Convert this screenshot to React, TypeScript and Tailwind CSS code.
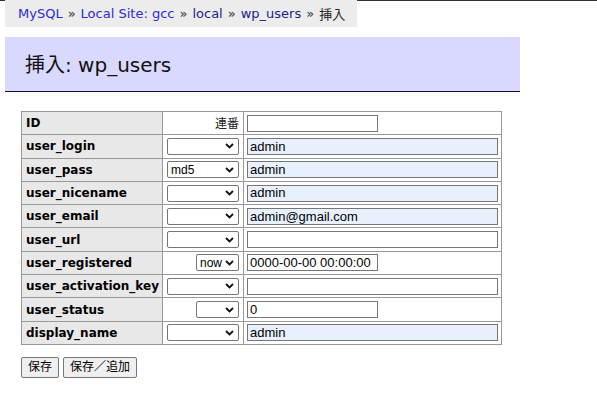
import React from "react";

type Row = {
  name: string;
  func?: string;
  narrow?: boolean;
  serial?: boolean;
  value: string;
  short?: boolean;
  filled?: boolean;
};

const rows: Row[] = [
  { name: "ID", serial: true, value: "", short: true },
  { name: "user_login", value: "admin", filled: true },
  { name: "user_pass", func: "md5", value: "admin", filled: true },
  { name: "user_nicename", value: "admin", filled: true },
  { name: "user_email", value: "admin@gmail.com", filled: true },
  { name: "user_url", value: "" },
  { name: "user_registered", func: "now", narrow: true, value: "0000-00-00 00:00:00", short: true },
  { name: "user_activation_key", value: "" },
  { name: "user_status", narrow: true, value: "0", short: true },
  { name: "display_name", value: "admin", filled: true },
];

const verdana = "font-['DejaVu_Sans',Verdana,sans-serif]";
const arial = "font-['Liberation_Sans','Noto_Sans_CJK_JP',Arial,sans-serif]";

function FuncSelect({ value, narrow }: { value?: string; narrow?: boolean }) {
  return (
    <div
      className={`ml-auto flex h-[17px] items-center justify-between rounded-[2px] border border-[#767676] bg-white pl-[3px] pr-[4px] text-[12px] text-black ${arial} ${
        narrow ? "w-[43px]" : "w-[72px]"
      }`}
    >
      <span className="leading-none">{value ?? ""}</span>
      <svg width="9" height="6" viewBox="0 0 9 6" className="shrink-0">
        <path d="M1 1 L4.5 4.5 L8 1" fill="none" stroke="#111" strokeWidth="1.8" />
      </svg>
    </div>
  );
}

export default function App() {
  return (
    <div className="min-h-[420px] w-[597px] border-t border-[#333] bg-white">
      {/* breadcrumb */}
      <div className={`-mt-px ml-[5px] flex h-[27px] w-[352px] items-center bg-[#ececec] pl-[13px] text-[13px] ${verdana}`}>
        <span className="text-[#2a2ad6]">MySQL</span>
        <span className="px-[5px] text-[#333]">»</span>
        <span className="text-[#2a2ad6]">Local Site: gcc</span>
        <span className="px-[5px] text-[#333]">»</span>
        <span className="text-[#1c1c8c]">local</span>
        <span className="px-[5px] text-[#333]">»</span>
        <span className="text-[#1c1c8c]">wp_users</span>
        <span className="px-[5px] text-[#333]">»</span>
        <span className="text-[#222] font-['Noto_Sans_CJK_JP',sans-serif]">挿入</span>
      </div>

      {/* header */}
      <div className="ml-[5px] mt-[10px] flex h-[55px] w-[515px] items-center border-b border-[#111133] bg-[#d9d9ff] pl-[20px]">
        <h1 className={`text-[20px] text-[#111] ${verdana}`}>
          <span className="font-['Noto_Sans_CJK_JP',sans-serif]">挿入</span>: wp_users
        </h1>
      </div>

      {/* form table */}
      <table className="ml-[21px] mt-[19px] w-[481px] border-collapse border border-[#999]">
        <tbody>
          {rows.map((r) => (
            <tr key={r.name} className="h-[23.3px]">
              <td className={`w-[142px] border border-[#999] bg-[#e8e8e8] pl-[4px] text-[12px] font-bold text-black ${verdana}`}>
                {r.name}
              </td>
              <td className="w-[80px] border border-[#999] px-[4px]">
                {r.serial ? (
                  <div className="text-right text-[12px] text-[#222] font-['Noto_Sans_CJK_JP',sans-serif]">連番</div>
                ) : (
                  <FuncSelect value={r.func} narrow={r.narrow} />
                )}
              </td>
              <td className="border border-[#999] px-[3px]">
                <div
                  className={`flex h-[17px] items-center border border-[#767676] pl-[2px] text-[13px] text-black ${arial} ${
                    r.short ? "w-[131px]" : "w-[251px]"
                  } ${r.filled ? "bg-[#e8f0fe]" : "bg-white"}`}
                >
                  {r.value}
                </div>
              </td>
            </tr>
          ))}
        </tbody>
      </table>

      {/* buttons */}
      <div className={`ml-[21px] mt-[12px] flex gap-[4px] text-[12px] ${arial}`}>
        <button className="h-[21px] rounded-[2px] border border-[#767676] bg-[#efefef] px-[6px] text-black">保存</button>
        <button className="h-[21px] rounded-[2px] border border-[#767676] bg-[#efefef] px-[6px] text-black">保存／追加</button>
      </div>
    </div>
  );
}
